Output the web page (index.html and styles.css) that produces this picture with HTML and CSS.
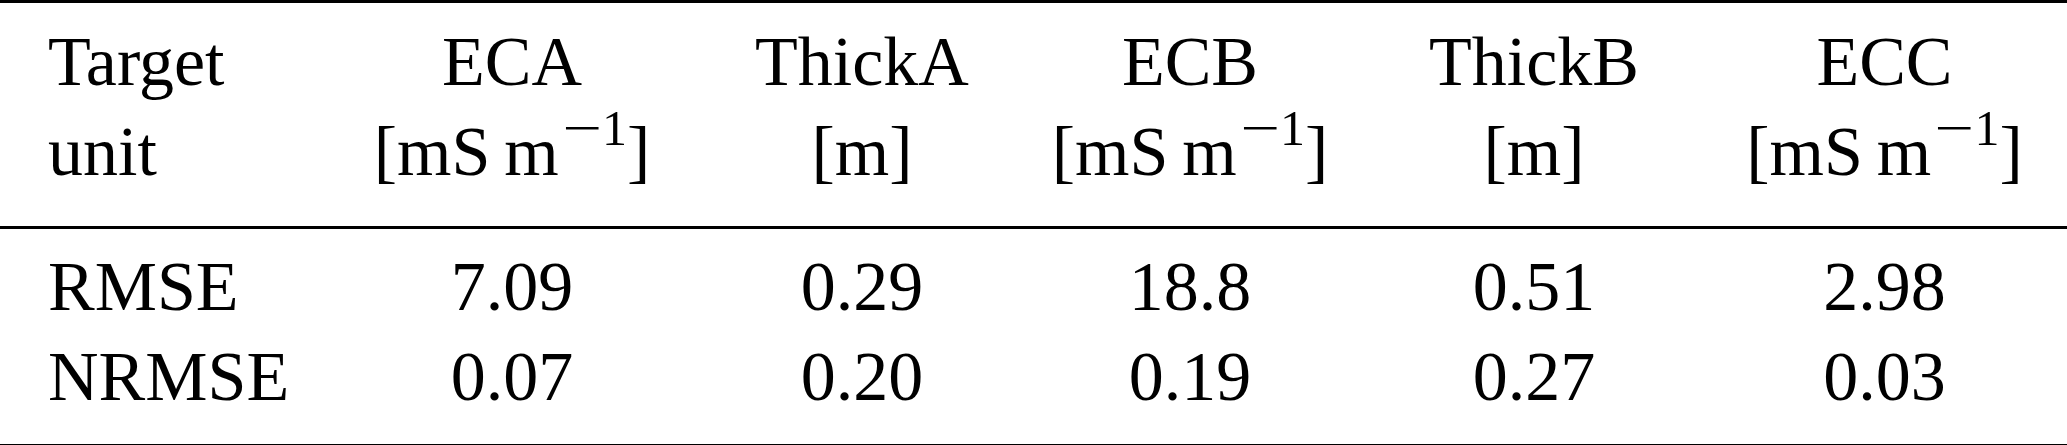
FILE: index.html
```html
<!DOCTYPE html>
<html>
   <head>
      <meta charset="UTF-8">
      <meta name="viewport" content="width=device-width, initial-scale=1.0"/>
      <title>Target unit errors</title>
      <link rel="stylesheet" href="styles.css">
   </head>
   <body>
      <table class="results">
         <colgroup>
            <col class="col-label">
            <col class="col-eca">
            <col class="col-thicka">
            <col class="col-ecb">
            <col class="col-thickb">
            <col class="col-ecc">
         </colgroup>
         <thead>
            <tr>
               <th class="label">Target<br>unit</th>
               <th>ECA<br>[mS&thinsp;m<sup class="exp"><span class="minus">&minus;</span>1</sup>]</th>
               <th>ThickA<br>[m]</th>
               <th>ECB<br>[mS&thinsp;m<sup class="exp"><span class="minus">&minus;</span>1</sup>]</th>
               <th>ThickB<br>[m]</th>
               <th class="last">ECC<br>[mS&thinsp;m<sup class="exp"><span class="minus">&minus;</span>1</sup>]</th>
            </tr>
         </thead>
         <tbody>
            <tr class="first-row">
               <td class="label">RMSE</td>
               <td>7.09</td>
               <td>0.29</td>
               <td>18.8</td>
               <td>0.51</td>
               <td class="last">2.98</td>
            </tr>
            <tr class="last-row">
               <td class="label">NRMSE</td>
               <td>0.07</td>
               <td>0.20</td>
               <td>0.19</td>
               <td>0.27</td>
               <td class="last">0.03</td>
            </tr>
         </tbody>
      </table>
   </body>
</html>
```

FILE: styles.css
```css
*
{
   box-sizing: border-box;
}

html,
body
{
   margin: 0;
   padding: 0;
   background: #ffffff;
}

body
{
   font-family: "Liberation Serif", "Times New Roman", serif;
   font-size: 70px;
   color: #000000;
}

.results
{
   width: 2067px;
   border-collapse: collapse;
   table-layout: fixed;
   border-top: 3px solid #000000;
   border-bottom: 4px solid #000000;
}

.col-label  { width: 340px; }
.col-eca    { width: 344px; }
.col-thicka { width: 356px; }
.col-ecb    { width: 300px; }
.col-thickb { width: 388px; }
.col-ecc    { width: 339px; }

.results th,
.results td
{
   padding: 0;
   font-weight: normal;
   text-align: center;
   line-height: 90px;
   white-space: nowrap;
}

.results thead th
{
   padding-top: 14px;
   padding-bottom: 29px;
   border-bottom: 3px solid #000000;
}

.results .label
{
   text-align: left;
   padding-left: 48px;
}

.results .last
{
   padding-right: 26px;
}

.first-row td
{
   padding-top: 13px;
}

.last-row td
{
   padding-bottom: 22px;
}

.exp
{
   font-size: 50px;
   line-height: 0;
   vertical-align: 30px;
   margin-left: 3px;
}

.minus
{
   display: inline-block;
   margin: 0 6px;
   transform: scaleX(1.4);
}
```
